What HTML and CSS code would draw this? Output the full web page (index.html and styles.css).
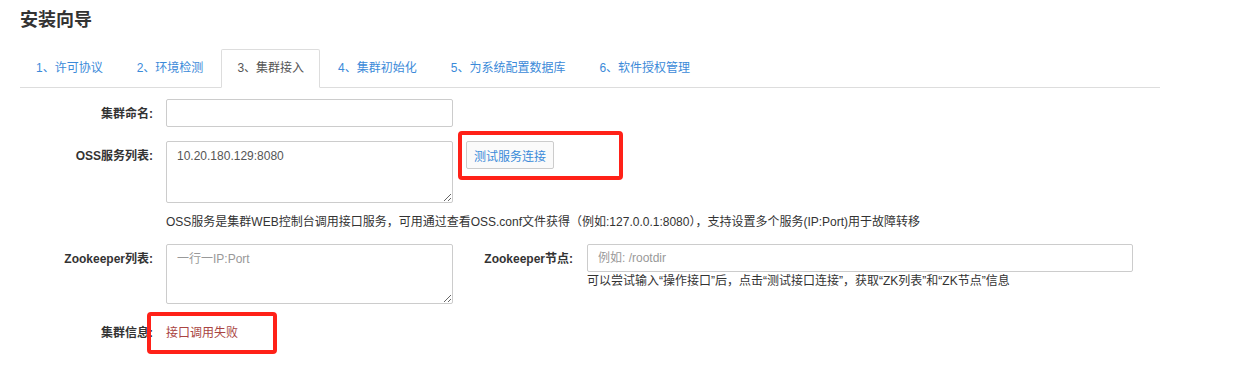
FILE: index.html
```html
<!DOCTYPE html>
<html lang="zh-CN">
<head>
<meta charset="utf-8">
<title>安装向导</title>
<link rel="stylesheet" href="styles.css">
</head>
<body>
<div class="page">
  <h1 class="title">安装向导</h1>
  <ul class="tabs">
    <li class="tab"><a>1、许可协议</a></li>
    <li class="tab"><a>2、环境检测</a></li>
    <li class="tab active"><a>3、集群接入</a></li>
    <li class="tab"><a>4、集群初始化</a></li>
    <li class="tab"><a>5、为系统配置数据库</a></li>
    <li class="tab"><a>6、软件授权管理</a></li>
  </ul>
  <div class="form">
    <div class="row row-name">
      <label class="label">集群命名:</label>
      <input class="control input-short" type="text">
    </div>
    <div class="row row-oss">
      <label class="label">OSS服务列表:</label>
      <textarea class="control area-oss">10.20.180.129:8080</textarea>
      <div class="btn-wrap">
        <button class="btn" type="button">测试服务连接</button>
        <span class="mark mark-btn"></span>
      </div>
    </div>
    <p class="help help-oss">OSS服务是集群WEB控制台调用接口服务，可用通过查看OSS.conf文件获得（例如:127.0.0.1:8080），支持设置多个服务(IP:Port)用于故障转移</p>
    <div class="row row-zk">
      <label class="label">Zookeeper列表:</label>
      <textarea class="control area-zk" placeholder="一行一IP:Port"></textarea>
      <label class="label label-2">Zookeeper节点:</label>
      <div class="zk-node">
        <input class="control input-long" type="text" placeholder="例如: /rootdir">
        <p class="help help-zk">可以尝试输入“操作接口”后，点击“测试接口连接”，获取“ZK列表”和“ZK节点”信息</p>
      </div>
    </div>
    <div class="row row-info">
      <label class="label">集群信息:</label>
      <div class="info">
        <span class="info-text">接口调用失败</span>
        <span class="mark mark-info"></span>
      </div>
    </div>
  </div>
</div>
</body>
</html>
```

FILE: styles.css
```css
* {
  box-sizing: border-box;
}

html,
body {
  min-height: 376px;
}

body {
  margin: 0;
  background: #ffffff;
  color: #333333;
  font-family: "Liberation Sans", "Noto Sans CJK SC", sans-serif;
  font-size: 12px;
  line-height: 17px;
}

.page {
  width: 1160px;
  padding: 0 0 34px 20px;
}

.title {
  margin: 0;
  padding-top: 10px;
  font-size: 18px;
  line-height: 20px;
  font-weight: bold;
  color: #333333;
}

.tabs {
  list-style: none;
  margin: 19px 0 0 0;
  padding: 0;
  display: flex;
  border-bottom: 1px solid #dddddd;
}

.tab {
  margin-bottom: -1px;
  margin-right: 2px;
}

.tab a {
  display: block;
  padding: 10px 15px;
  line-height: 17px;
  border: 1px solid transparent;
  border-radius: 2px 2px 0 0;
  color: #3b8ad9;
  white-space: nowrap;
}

.tab.active a {
  color: #555555;
  background: #ffffff;
  border-color: #dddddd;
  border-bottom-color: transparent;
}

.form {
  margin-top: 11px;
}

.row {
  display: flex;
  align-items: flex-start;
}

.label {
  width: 133px;
  flex: none;
  margin-right: 13px;
  padding-top: 7px;
  text-align: right;
  font-weight: bold;
  color: #333333;
  white-space: nowrap;
}

.control {
  display: block;
  border: 1px solid #cccccc;
  border-radius: 2px;
  background: #ffffff;
  font-family: "Liberation Sans", "Noto Sans CJK SC", sans-serif;
  font-size: 12px;
  line-height: 17px;
  color: #555555;
  padding: 5px 10px;
  margin: 0;
  outline: none;
}

.control::placeholder {
  color: #999999;
}

textarea.control {
  resize: vertical;
  padding-top: 6px;
}

.input-short {
  width: 287px;
  height: 28px;
}

.row-name {
  margin-bottom: 14px;
}

.area-oss {
  width: 287px;
  height: 62px;
}

.btn-wrap {
  position: relative;
  margin-left: 13px;
}

.btn {
  display: block;
  width: 88px;
  height: 28px;
  padding: 0;
  border: 1px solid #cccccc;
  border-radius: 2px;
  background: #fafafa;
  color: #3b8ad9;
  font-family: "Liberation Sans", "Noto Sans CJK SC", sans-serif;
  font-size: 12px;
}

.mark {
  position: absolute;
  border: 4px solid #ff2118;
  border-radius: 4px;
  pointer-events: none;
}

.mark-btn {
  left: -8px;
  top: -10px;
  width: 165px;
  height: 49px;
}

.help {
  margin: 0;
  color: #333333;
  white-space: nowrap;
}

.help-oss {
  margin: 11px 0 13px 146px;
}

.area-zk {
  width: 287px;
  height: 60px;
}

.label-2 {
  width: 120px;
  margin-right: 14px;
}

.zk-node {
  display: flex;
  flex-direction: column;
}

.input-long {
  width: 546px;
  height: 28px;
}

.help-zk {
  margin-top: 1px;
}

.row-info {
  margin-top: 14px;
}

.info {
  position: relative;
  padding-top: 7px;
}

.info-text {
  color: #a94442;
}

.mark-info {
  left: -19px;
  top: -6px;
  width: 130px;
  height: 42px;
}
```
